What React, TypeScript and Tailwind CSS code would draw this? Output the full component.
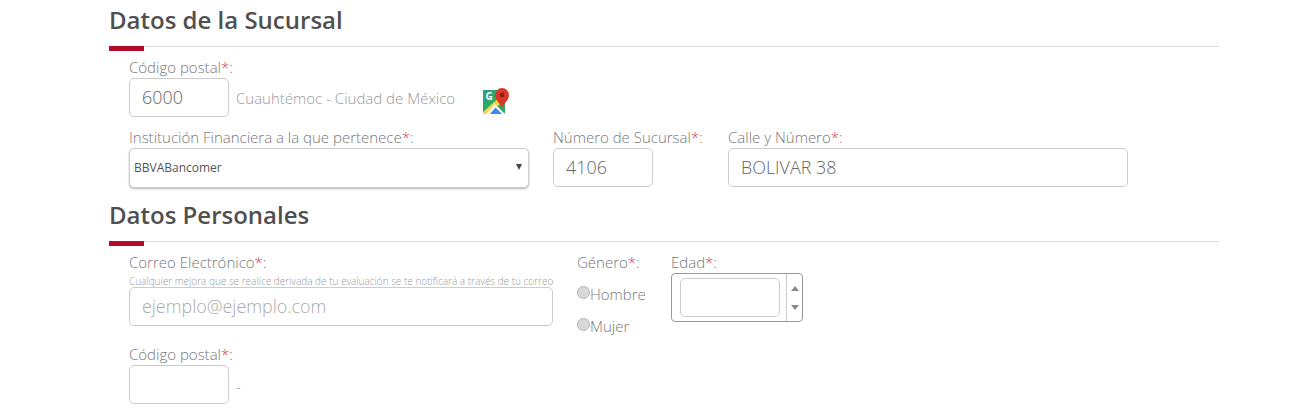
import React from 'react';

const inputClass =
  "h-[39px] rounded-[5px] border border-[#cccccc] bg-white pl-3 pr-3 pb-[2px] text-[17.9px] font-light text-[#666666] outline-none placeholder:text-[#aaaaaa]";

function FieldLabel({ text }: { text: string }) {
  return (
    <label className="block h-[22px] text-[15px] leading-[22px] font-light text-[#777777]">
      {text}
      <span className="text-[#d2374f]">*</span>:
    </label>
  );
}

function SectionTitle({ title }: { title: string }) {
  return (
    <div className="relative h-[47px] border-b border-[#dddddd]">
      <h2 className="text-[24px] leading-[40px] font-semibold text-[#505050]">{title}</h2>
      <div className="absolute left-0 top-[46px] h-[5px] w-[35px] bg-[#b5092a]" />
    </div>
  );
}

function MapsIcon() {
  return (
    <svg width="28" height="28" viewBox="0 0 28 28" className="ml-[27px] mt-[9px]">
      <rect x="1" y="3" width="22" height="24" rx="1.5" fill="#2fa866" />
      <path d="M1 3h14L1 19z" fill="#2aa47a" />
      <path d="M1 25L21 7l2 3v3L6 27H2.5A1.5 1.5 0 0 1 1 25.5z" fill="#f3d34f" />
      <path d="M4 27l9-10 10 10z" fill="#f7f6ea" />
      <path d="M8 27l5.5-6.5L20 27z" fill="#4285f4" />
      <text x="3.5" y="13" fontSize="10" fontWeight="700" fill="#ffffff" fontFamily="'Open Sans', sans-serif">G</text>
      <path d="M20 1a7 7 0 0 0-7 7c0 5 5 8 7 13 2-5 7-8 7-13a7 7 0 0 0-7-7z" fill="#d8392b" />
      <circle cx="20" cy="8" r="2.4" fill="#8f1f14" />
    </svg>
  );
}

function RadioOption({ text }: { text: string }) {
  return (
    <div className="flex h-[32px] items-center text-[15px] font-light text-[#777777]">
      <span className="mb-[3px] h-[13px] w-[13px] rounded-full border border-[#b5b5b5] bg-[#d8d8d8]" />
      {text}
    </div>
  );
}

export default function App() {
  return (
    <div className="h-[411px] w-[1290px] overflow-hidden bg-white font-['Open_Sans',sans-serif]">
      <div className="ml-[109px] w-[1110px]">
        <SectionTitle title="Datos de la Sucursal" />

        <div className="pl-[20px]">
          <div className="pt-[9px]">
            <FieldLabel text="Código postal" />
            <div className="flex h-[39px] items-start">
              <input className={`${inputClass} w-[100px]`} defaultValue="6000" />
              <span className="ml-[7px] text-[15px] leading-[41px] font-light text-[#999999]">
                Cuauhtémoc - Ciudad de México
              </span>
              <MapsIcon />
            </div>
          </div>

          <div className="mt-[9px] flex">
            <div className="w-[400px]">
              <FieldLabel text="Institución Financiera a la que pertenece" />
              <div className="relative h-[40px] rounded-[5px] border border-[#cccccc] bg-white shadow-[0_1px_2px_rgba(0,0,0,0.3)]">
                <span className="block pl-[4px] text-[12px] leading-[37px] text-[#555555]">BBVABancomer</span>
                <span className="absolute right-[6px] top-[15px] h-0 w-0 border-x-[3px] border-t-[6px] border-x-transparent border-t-[#444444]" />
              </div>
            </div>
            <div className="ml-[24px] w-[100px]">
              <div className="w-[160px]">
                <FieldLabel text="Número de Sucursal" />
              </div>
              <input className={`${inputClass} w-[100px]`} defaultValue="4106" />
            </div>
            <div className="ml-[75px] w-[400px]">
              <FieldLabel text="Calle y Número" />
              <input className={`${inputClass} w-[400px]`} defaultValue="BOLIVAR 38" />
            </div>
          </div>
        </div>

        <div className="mt-[7px]">
          <SectionTitle title="Datos Personales" />
        </div>

        <div className="pl-[20px]">
          <div className="flex pt-[9px]">
            <div className="w-[424px]">
              <FieldLabel text="Correo Electrónico" />
              <p className="mt-[2px] h-[12px] whitespace-nowrap text-[10px] leading-[12px] font-light text-[#999999]">
                Cualquier mejora que se realice derivada de tu evaluación se te notificará a través de tu correo
              </p>
              <input className={`${inputClass} w-[424px]`} placeholder="ejemplo@ejemplo.com" />
            </div>

            <div className="ml-[24px] w-[94px]">
              <FieldLabel text="Género" />
              <div className="mt-[5px]">
                <RadioOption text="Hombre" />
                <RadioOption text="Mujer" />
              </div>
            </div>

            <div className="w-[132px]">
              <FieldLabel text="Edad" />
              <div className="flex h-[49px] w-[132px] rounded-[4px] border border-[#999999] bg-white">
                <div className="flex flex-1 items-center pl-[8px]">
                  <div className="h-[39px] w-[100px] rounded-[5px] border border-[#cccccc]" />
                </div>
                <div className="flex w-[16px] flex-col items-center justify-center gap-[14px] border-l border-[#cccccc]">
                  <span className="h-0 w-0 border-x-[4px] border-b-[5px] border-x-transparent border-b-[#888888]" />
                  <span className="h-0 w-0 border-x-[4px] border-t-[5px] border-x-transparent border-t-[#888888]" />
                </div>
              </div>
            </div>
          </div>

          <div className="mt-[1px]">
            <FieldLabel text="Código postal" />
            <div className="flex items-start">
              <input className={`${inputClass} w-[100px]`} />
              <span className="ml-[7px] text-[15px] leading-[42px] font-light text-[#999999]">-</span>
            </div>
          </div>
        </div>
      </div>
    </div>
  );
}
